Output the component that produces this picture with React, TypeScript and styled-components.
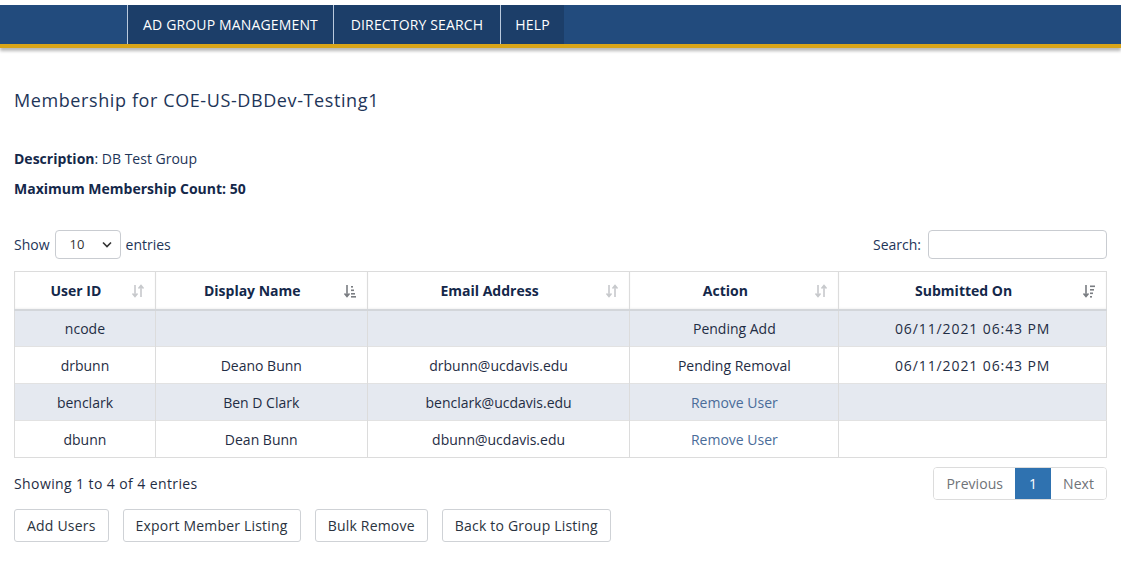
import React from "react";
import styled, { createGlobalStyle } from "styled-components";

const Global = createGlobalStyle`
  html, body { margin: 0; padding: 0; background: #fff; }
  body { font-family: "Open Sans", "Noto Sans", sans-serif; font-size: 14px; color: #1f2d44; }
  * { box-sizing: border-box; }
`;

const Page = styled.div`
  width: 1121px;
  min-height: 563px;
  padding-top: 5px;
`;

const NavBar = styled.nav`
  height: 43px;
  background: #224b7d;
  display: flex;
  padding-left: 127px;
  border-bottom: 4px solid #d9a519;
  box-shadow: 0 3px 3px rgba(0, 0, 0, 0.28);
`;

const NavItem = styled.a<{ $w: number }>`
  display: flex;
  align-items: center;
  justify-content: center;
  width: ${(p) => p.$w}px;
  background: #1c3e69;
  color: #fff;
  font-family: "Open Sans", sans-serif;
  font-size: 14px;
  letter-spacing: 0.15px;
  text-decoration: none;
  border-left: 1px solid #b9c9dd;
`;

const Main = styled.main`
  padding: 0 14px;
`;

const Title = styled.h1`
  margin: 40px 0 0;
  font-size: 18px;
  font-weight: 400;
  letter-spacing: 0.6px;
  color: #1e3558;
  line-height: 24px;
`;

const InfoLine = styled.p<{ $mt: number }>`
  margin: ${(p) => p.$mt}px 0 0;
  line-height: 20px;
  color: #1e3558;
  font-size: 14px;
`;

const Label = styled.b`
  font-weight: 700;
  color: #14284a;
`;

const Controls = styled.div`
  margin-top: 30px;
  display: flex;
  justify-content: space-between;
  align-items: center;
  height: 30px;
`;

const Inline = styled.label`
  display: flex;
  align-items: center;
  gap: 5px;
  color: #1e3558;
`;

const SelectBox = styled.div`
  width: 66px;
  height: 29px;
  border: 1px solid #c9ccd1;
  border-radius: 4px;
  display: flex;
  align-items: center;
  justify-content: space-between;
  padding: 0 8px 0 14px;
  font-size: 13px;
  color: #333;
`;

const SearchInput = styled.input`
  width: 179px;
  height: 29px;
  border: 1px solid #c9ccd1;
  border-radius: 4px;
  margin-left: 2px;
`;

const Table = styled.table`
  margin-top: 12px;
  width: 100%;
  border-collapse: collapse;
  border: 1px solid #dcdcdc;
`;

const Th = styled.th`
  position: relative;
  height: 38px;
  padding: 0 28px 0 10px;
  text-align: center;
  font-weight: 700;
  color: #14284a;
  border-left: 1px solid #dcdcdc;
  border-bottom: 2px solid #d3d6da;
  box-shadow: inset 0 -1px 2px rgba(0,0,0,0.05);
  font-size: 14px;
`;

const SortIcon = styled.span`
  position: absolute;
  right: 10px;
  top: 11px;
  display: flex;
`;

const Tr = styled.tr<{ $striped: boolean }>`
  background: ${(p) => (p.$striped ? "#e5e9f0" : "#fff")};
`;

const Td = styled.td`
  height: 37px;
  text-align: center;
  border-left: 1px solid #dcdcdc;
  border-top: 1px solid #e2e2e2;
  color: #1f2d44;
  padding: 0 10px;
`;

const DateText = styled.span`
  letter-spacing: 0.9px;
`;

const LinkText = styled.a`
  color: #4a6c99;
  text-decoration: none;
`;

const Footer = styled.div`
  display: flex;
  justify-content: space-between;
  align-items: center;
  margin-top: 9px;
  height: 33px;
`;

const Info = styled.span`
  letter-spacing: 0.4px;
  color: #1f2d44;
`;

const Pager = styled.div`
  display: flex;
  border: 1px solid #dcdcdc;
  border-radius: 4px;
  overflow: hidden;
  height: 33px;
`;

const PageBtn = styled.span<{ $active?: boolean }>`
  display: flex;
  align-items: center;
  padding: 0 ${(p) => (p.$active ? 14 : 12)}px;
  background: ${(p) => (p.$active ? "#2f72b0" : "#fff")};
  color: ${(p) => (p.$active ? "#fff" : "#6f7378")};
  font-size: 14px;
  letter-spacing: 0.05px;
`;

const Buttons = styled.div`
  display: flex;
  gap: 14px;
  margin-top: 9px;
`;

const Button = styled.button`
  height: 33px;
  padding: 0 12px;
  background: #fff;
  border: 1px solid #cfd2d6;
  border-radius: 3px;
  font-family: "Open Sans", sans-serif;
  font-size: 14px;
  letter-spacing: 0.2px;
  color: #2a3340;
`;

const Chevron = () => (
  <svg width="10" height="7" viewBox="0 0 10 7">
    <path d="M1 1.5 L5 5.5 L9 1.5" fill="none" stroke="#333" strokeWidth="1.6" />
  </svg>
);

type SortKind = "none" | "asc" | "desc";

const Sort = ({ kind }: { kind: SortKind }) => {
  const light = "#c7c9cc";
  const dark = "#7a7d82";
  if (kind === "none") {
    return (
      <svg width="14" height="16" viewBox="0 0 14 16">
        <path d="M4 2 V13 M1.5 10.5 L4 13.5 L6.5 10.5" fill="none" stroke={light} strokeWidth="1.6" />
        <path d="M10 14 V3 M7.5 5.5 L10 2.5 L12.5 5.5" fill="none" stroke={light} strokeWidth="1.6" />
      </svg>
    );
  }
  if (kind === "asc") {
    return (
      <svg width="14" height="16" viewBox="0 0 14 16">
        <path d="M4 2 V13 M1.5 10.5 L4 13.5 L6.5 10.5" fill="none" stroke={dark} strokeWidth="1.6" />
        <rect x="8" y="3" width="2" height="1.6" fill={dark} />
        <rect x="8" y="6.5" width="3" height="1.6" fill={dark} />
        <rect x="8" y="10" width="4" height="1.6" fill={dark} />
        <rect x="8" y="13" width="5" height="1.6" fill={dark} />
      </svg>
    );
  }
  return (
    <svg width="14" height="16" viewBox="0 0 14 16">
      <path d="M4 2 V13 M1.5 10.5 L4 13.5 L6.5 10.5" fill="none" stroke={dark} strokeWidth="1.6" />
      <rect x="8" y="2.5" width="5" height="1.6" fill={dark} />
      <rect x="8" y="6" width="4" height="1.6" fill={dark} />
      <rect x="8" y="9.5" width="3" height="1.6" fill={dark} />
      <rect x="8" y="13" width="2" height="1.6" fill={dark} />
    </svg>
  );
};

const columns: { label: string; width: number; sort: SortKind }[] = [
  { label: "User ID", width: 141, sort: "none" },
  { label: "Display Name", width: 212, sort: "asc" },
  { label: "Email Address", width: 263, sort: "none" },
  { label: "Action", width: 209, sort: "none" },
  { label: "Submitted On", width: 268, sort: "desc" },
];

type Row = { id: string; name: string; email: string; action: string; link?: boolean; date: string };

const rows: Row[] = [
  { id: "ncode", name: "", email: "", action: "Pending Add", date: "06/11/2021 06:43 PM" },
  { id: "drbunn", name: "Deano Bunn", email: "drbunn@ucdavis.edu", action: "Pending Removal", date: "06/11/2021 06:43 PM" },
  { id: "benclark", name: "Ben D Clark", email: "benclark@ucdavis.edu", action: "Remove User", link: true, date: "" },
  { id: "dbunn", name: "Dean Bunn", email: "dbunn@ucdavis.edu", action: "Remove User", link: true, date: "" },
];

export default function App() {
  return (
    <Page>
      <Global />
      <NavBar>
        <NavItem $w={206}>AD GROUP MANAGEMENT</NavItem>
        <NavItem $w={167}>DIRECTORY SEARCH</NavItem>
        <NavItem $w={64}>HELP</NavItem>
      </NavBar>
      <Main>
        <Title>Membership for COE-US-DBDev-Testing1</Title>
        <InfoLine $mt={37}>
          <Label>Description</Label>: DB Test Group
        </InfoLine>
        <InfoLine $mt={10}>
          <Label>Maximum Membership Count: 50</Label>
        </InfoLine>
        <Controls>
          <Inline>
            Show
            <SelectBox>
              10 <Chevron />
            </SelectBox>
            entries
          </Inline>
          <Inline>
            Search:
            <SearchInput />
          </Inline>
        </Controls>
        <Table>
          <colgroup>
            {columns.map((c) => (
              <col key={c.label} style={{ width: c.width }} />
            ))}
          </colgroup>
          <thead>
            <tr>
              {columns.map((c) => (
                <Th key={c.label}>
                  {c.label}
                  <SortIcon>
                    <Sort kind={c.sort} />
                  </SortIcon>
                </Th>
              ))}
            </tr>
          </thead>
          <tbody>
            {rows.map((r, i) => (
              <Tr key={r.id} $striped={i % 2 === 0}>
                <Td>{r.id}</Td>
                <Td>{r.name}</Td>
                <Td>{r.email}</Td>
                <Td>{r.link ? <LinkText>{r.action}</LinkText> : r.action}</Td>
                <Td>
                  <DateText>{r.date}</DateText>
                </Td>
              </Tr>
            ))}
          </tbody>
        </Table>
        <Footer>
          <Info>Showing 1 to 4 of 4 entries</Info>
          <Pager>
            <PageBtn>Previous</PageBtn>
            <PageBtn $active>1</PageBtn>
            <PageBtn>Next</PageBtn>
          </Pager>
        </Footer>
        <Buttons>
          <Button>Add Users</Button>
          <Button>Export Member Listing</Button>
          <Button>Bulk Remove</Button>
          <Button>Back to Group Listing</Button>
        </Buttons>
      </Main>
    </Page>
  );
}
